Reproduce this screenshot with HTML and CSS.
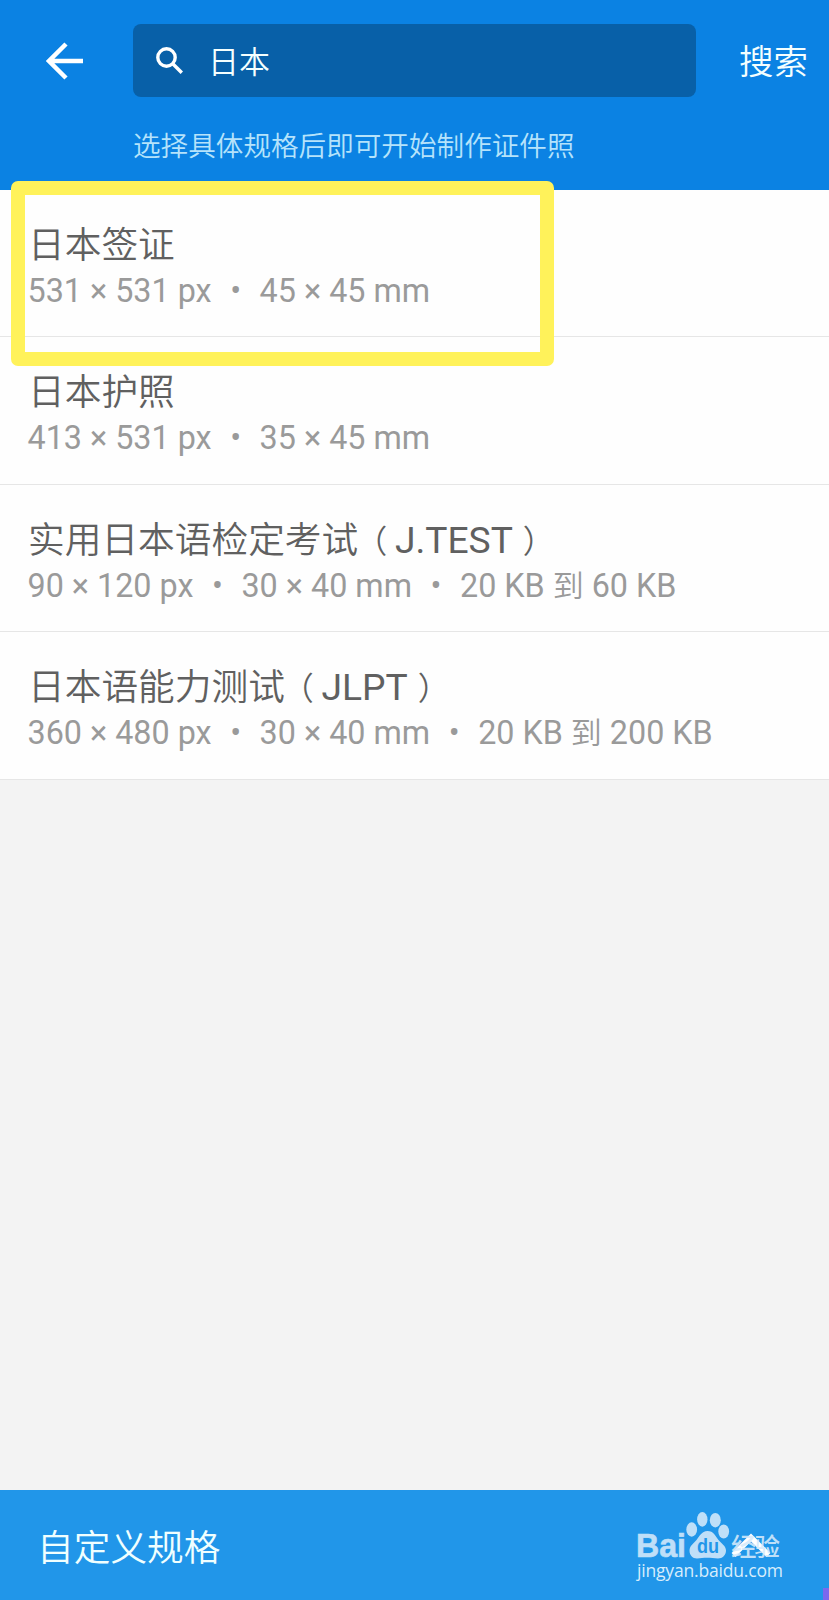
FILE: index.html
```html
<!DOCTYPE html>
<html lang="zh-CN">
<head>
  <meta charset="UTF-8" />
  <title>搜索规格</title>
  <link rel="stylesheet" href="styles.css">
</head>
<body>

  <header>
    <div class="search-row">
      <svg class="back" viewBox="0 0 38 38">
        <path d="M37 19H4M20 2L3 19l17 17" />
      </svg>
      <div class="search-box">
        <svg class="search-icon" viewBox="0 0 28 28">
          <circle cx="10.5" cy="10.5" r="8.7" />
          <path d="M16.5 16.5l9.3 9.3" />
        </svg>
        <span>日本</span>
      </div>
      <span class="search-btn">搜索</span>
    </div>
    <p class="hint">选择具体规格后即可开始制作证件照</p>
  </header>

  <main>
    <div class="item">
      <h2>日本签证</h2>
      <p>531 × 531 px<i>•</i>45 × 45 mm</p>
    </div>
    <div class="item">
      <h2>日本护照</h2>
      <p>413 × 531 px<i>•</i>35 × 45 mm</p>
    </div>
    <div class="item">
      <h2>实用日本语检定考试<span class="open">（</span><em>J.TEST</em><span class="close">）</span></h2>
      <p>90 × 120 px<i>•</i>30 × 40 mm<i>•</i>20 KB <b>到</b> 60 KB</p>
    </div>
    <div class="item">
      <h2>日本语能力测试<span class="open">（</span><em>JLPT</em><span class="close">）</span></h2>
      <p>360 × 480 px<i>•</i>30 × 40 mm<i>•</i>20 KB <b>到</b> 200 KB</p>
    </div>
    <!-- yellow marker around the first result -->
    <div class="marker"></div>
  </main>

  <footer>
    <span>自定义规格</span>
    <svg class="arrow" viewBox="0 0 40 25">
      <path d="M2.5 22L20 4.5l17.5 17.5" />
    </svg>
    <svg class="watermark" viewBox="0 0 160 80">
      <g class="logo">
        <text class="bai" x="3" y="45" textLength="50" lengthAdjust="spacingAndGlyphs">Bai</text>
        <ellipse cx="58.7" cy="17.5" rx="5.4" ry="7.2" />
        <ellipse cx="69.3" cy="7.4" rx="5.2" ry="7.3" />
        <ellipse cx="82.3" cy="8.2" rx="5.5" ry="7.2" />
        <ellipse cx="90.7" cy="19.5" rx="5.4" ry="7" />
        <path d="M74.5 19c6 0 8 5 11 9 3 3.5 7.5 6 7.5 10.5 0 4.5-3.5 8-8 8-4 0-7-.7-11-.7s-6 .7-10 .7c-4.5 0-7.5-3.5-7.5-8 0-4.5 4-7 7-10.500s5-9 11-9z" />
        <text class="jy" x="98" y="43.5" textLength="49">经验</text>
      </g>
      <text class="du" x="64" y="41" textLength="22" lengthAdjust="spacingAndGlyphs">du</text>
      <text class="url" x="4" y="65" textLength="146">jingyan.baidu.com</text>
    </svg>
    <div class="corner"></div>
  </footer>

</body>
</html>
```
FILE: styles.css
```css
* {
  box-sizing: border-box;
}

body {
  margin: 0;
  height: 1600px;
  display: flex;
  flex-direction: column;
  font-family: Roboto, "Noto Sans CJK SC", sans-serif;
  font-weight: 350;
  background: #f3f3f3;
  overflow: hidden;
}

h2, p {
  margin: 0;
  white-space: nowrap;
}

header {
  height: 189.6px;
  background: #0b82e3;
  color: #f4ffff;
  padding-top: 24px;
}

.search-row {
  display: flex;
  align-items: center;
  height: 73px;
}

.back {
  width: 38px;
  height: 38px;
  margin-left: 46px;
}

.back path,
.search-icon path,
.search-icon circle,
.arrow path {
  fill: none;
  stroke: #fff;
  stroke-width: 4.5;
}

.search-box {
  display: flex;
  align-items: center;
  width: 563px;
  height: 73px;
  margin-left: 49px;
  padding-left: 23px;
  border-radius: 8px;
  background: #0860a8;
  font-size: 31px;
}

.search-box span {
  margin-bottom: 2px;
}

.search-icon {
  width: 28px;
  height: 28px;
  margin: 0 24px 0 0;
}

.search-icon path,
.search-icon circle {
  stroke-width: 3.4;
}

.search-btn {
  margin: 0 0 3px 43px;
  font-size: 34.5px;
}

.hint {
  margin: 30px 0 0 133px;
  font-size: 27.6px;
  line-height: 40px;
  color: #b5e3fb;
}

main {
  position: relative;
  flex: 1;
}

.item {
  height: 147.6px;
  padding: 33px 0 0 28px;
  background: #fefefe;
  border-bottom: 1px solid #e6e6e6;
}

.item h2 {
  height: 45px;
  font-size: 36.7px;
  line-height: 46px;
  font-weight: 350;
  color: #606060;
}

.item em {
  font-style: normal;
  font-weight: 400;
  font-size: 37.2px;
  line-height: 1;
}

/* fullwidth brackets sit away from the latin text */
.item .open,
.item .close {
  font-size: 32px;
  line-height: 1;
}

.item .open {
  margin: 0 7.7px 0 -3px;
}

.item .close {
  margin-left: 10px;
}

.item p {
  margin-left: -0.5px;
  font-size: 32.3px;
  line-height: 46px;
  font-weight: 400;
  color: #9a9a9a;
}

.item i {
  display: inline-block;
  width: 48px;
  text-align: center;
  font-style: normal;
}

.item b {
  font-weight: 350;
  font-size: 31px;
  line-height: 1;
}

.marker {
  position: absolute;
  left: 11px;
  top: -8.6px;
  width: 543px;
  height: 185px;
  border: 14px solid #fff25a;
  border-radius: 7px;
}

footer {
  position: relative;
  display: flex;
  align-items: center;
  justify-content: space-between;
  height: 110px;
  padding: 0 58px 0 37px;
  background: #2196e9;
  color: #f0ffff;
  font-size: 36.7px;
}

.arrow {
  width: 40px;
  height: 25px;
}

.arrow path {
  stroke-width: 5.5;
}

.watermark {
  position: absolute;
  left: 633px;
  top: 22px;
  width: 160px;
  height: 80px;
}

.logo {
  fill: #d5eafb;
  opacity: 0.88;
}

.bai,
.du {
  font-family: "Liberation Sans", sans-serif;
  font-weight: 700;
  font-size: 33px;
}

.bai {
  stroke: #d5eafb;
  stroke-width: 0.6;
}

.du {
  font-size: 20px;
  fill: #2196e9;
}

.jy {
  font-family: "Noto Sans CJK SC", sans-serif;
  font-weight: 500;
  font-size: 25.5px;
}

.url {
  font-family: "Open Sans", sans-serif;
  font-weight: 400;
  font-size: 17.5px;
  fill: #d7edfc;
}

.corner {
  position: absolute;
  right: 0;
  bottom: 0;
  width: 6px;
  height: 12px;
  background: #7b68ee;
}
```
